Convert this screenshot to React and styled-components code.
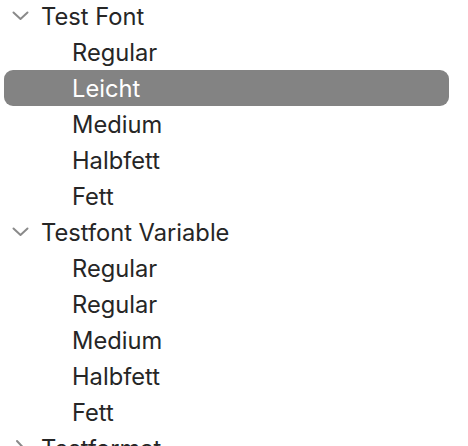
import React from 'react';
import styled, { createGlobalStyle } from 'styled-components';

const GlobalStyle = createGlobalStyle`
    html, body {
        margin: 0;
        padding: 0;
        background: #ffffff;
        overflow: hidden;
    }
`;

const Tree = styled.ul`
    list-style: none;
    margin: -2px 0 0 0;
    padding: 0 19px 0 4px;
    font-family: Inter, "Noto Sans", sans-serif;
    font-size: 23.7px;
    color: #262626;
`;

const Row = styled.li`
    height: 36px;
    display: flex;
    align-items: center;
    border-radius: 9px;
    padding-left: ${props => props.$depth ? '68px' : '8px'};
    background: ${props => props.$selected ? '#838383' : 'transparent'};
    color: ${props => props.$selected ? '#ffffff' : '#262626'};
`;

const Toggle = styled.span`
    width: 17px;
    height: 16px;
    margin-right: 12px;
    display: flex;
    align-items: center;
    justify-content: center;
    color: #8a8a8a;
`;

const Label = styled.span`
    line-height: 34px;
    padding-top: 2px;
    white-space: nowrap;
`;

const Chevron = ({open}) => (
    <svg width="17" height="16" viewBox="0 0 17 16" fill="none" stroke="currentColor"
        strokeWidth="2" strokeLinecap="round" strokeLinejoin="round"
        style={{transform: open ? 'none' : 'rotate(-90deg)'}}>
        <path d="M1.5 4.5 L8.5 11 L15.5 4.5"/>
    </svg>
);

const groups = [
    {name: 'Test Font', open: true, items: ['Regular', 'Leicht', 'Medium', 'Halbfett', 'Fett']},
    {name: 'Testfont Variable', open: true, items: ['Regular', 'Regular', 'Medium', 'Halbfett', 'Fett']},
    {name: 'Testformat', open: false, items: []},
];

const App = () => {
    return (
        <>
            <GlobalStyle/>
            <Tree>
                {groups.map((group, g) => (
                    <React.Fragment key={g}>
                        <Row>
                            <Toggle><Chevron open={group.open}/></Toggle>
                            <Label>{group.name}</Label>
                        </Row>
                        {group.open && group.items.map((item, i) => (
                            <Row key={i} $depth={1} $selected={g === 0 && i === 1}>
                                <Label>{item}</Label>
                            </Row>
                        ))}
                    </React.Fragment>
                ))}
            </Tree>
        </>
    );
};

export default App;
